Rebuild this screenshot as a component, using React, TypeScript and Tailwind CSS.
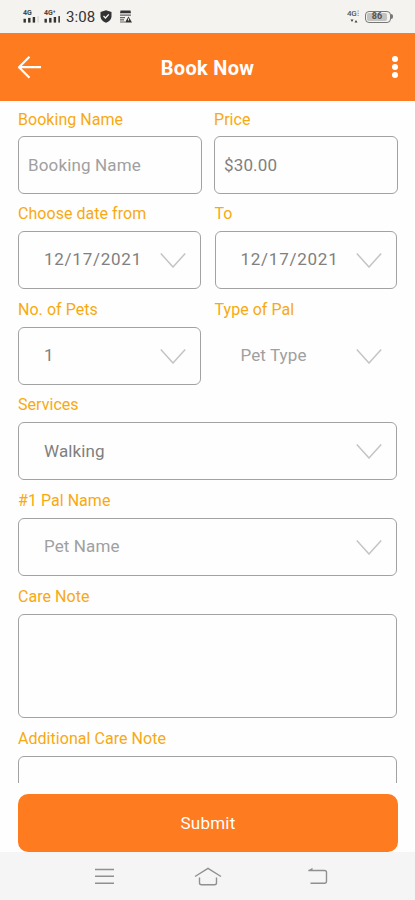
import { useState, type ReactNode } from "react";
import clsx from "clsx";

function Signal({ label, bars }: { label: string; bars: string[] }) {
  return (
    <div className="flex w-4 flex-col items-start">
      <span className="h-[6px] text-[7px] leading-[6px] font-bold text-[#444]">{label}</span>
      <svg width="16" height="7" viewBox="0 0 16 7">
        {bars.map((color, i) => (
          <rect key={i} x={0.5 + i * 4.6} y={2.8 - i * 0.9} width="2.4" height={3.8 + i * 0.9} fill={color} />
        ))}
      </svg>
    </div>
  );
}

function StatusBar() {
  return (
    <div className="flex h-[33px] shrink-0 items-center bg-[#f4f3f0] pr-[22px] pl-[23px] text-[#333]">
      <Signal label="4G" bars={["#333", "#333", "#333", "#ddd"]} />
      <div className="w-[5px]" />
      <Signal label="4G⁺" bars={["#333", "#333", "#333", "#444"]} />
      <span className="ml-[6px] pt-px text-[15px] leading-none tracking-[0.1px] text-[#333]">3:08</span>
      <svg className="ml-[5px]" width="12" height="13" viewBox="0 0 12 13">
        <path d="M6 .3 11.5 2v4.5c0 3-2.3 5-5.5 6.3C2.800 11.500.5 9.500.5 6.500V2Z" fill="#333" />
        <path d="m3.500 6 2 2 3.300-3.600" fill="none" stroke="#f4f3f0" strokeWidth="1.300" />
      </svg>
      <svg className="ml-[7px]" width="13" height="13" viewBox="0 0 13 13">
        <path d="M1.500.5h10l.5 2.800H1Z" fill="#333" />
        <path d="M1 5.200h11M1 7.600h5M1 9.800h4M1 12h5" stroke="#666" strokeWidth="1.200" />
        <path d="M9.500 6.500 13 12.500H6Z" fill="#333" />
        <path d="M9.500 8.500v2" stroke="#eee" />
      </svg>
      <div className="ml-auto flex h-4 w-[14px] flex-col">
        <span className="h-[9px] text-[8px] leading-[10px] font-medium tracking-tight whitespace-nowrap text-[#555]">4G⁝</span>
        <svg className="ml-[3px]" width="8" height="6" viewBox="0 0 8 6">
          <path d="M.5 1.500h3L2 4Z M4.500 4.500h3L6 2Z" fill="#444" />
        </svg>
      </div>
      <div className="ml-[4px] flex items-center">
        <div className="flex h-[12px] w-[26px] items-center rounded-[4px] border border-[#777] p-px">
          <div className="flex h-full w-[20px] items-center justify-center rounded-[2px] bg-[#c2c2c0] text-[9px] leading-none font-bold text-[#555]">
            86
          </div>
        </div>
        <div className="h-[5px] w-[2px] rounded-r-full bg-[#777]" />
      </div>
    </div>
  );
}

function AppBar() {
  return (
    <header className="grid h-[68px] shrink-0 grid-cols-[1fr_auto_1fr] items-center bg-[#ff7b20] px-[17px] text-white">
      <button type="button" aria-label="Back">
        <svg width="25" height="24" viewBox="0 0 25 24" fill="none" stroke="currentColor" strokeWidth="2.200">
          <path d="M24 12.200H2M12.500 1.700 2 12.200l10.500 10.500" strokeLinejoin="round" />
        </svg>
      </button>
      <h1 className="pt-[2px] text-[20px] leading-none font-bold tracking-[0.3px]">Book Now</h1>
      <button type="button" aria-label="More" className="flex flex-col gap-[2px] justify-self-end">
        <span className="size-[6px] rounded-full bg-white" />
        <span className="size-[6px] rounded-full bg-white" />
        <span className="size-[6px] rounded-full bg-white" />
      </button>
    </header>
  );
}

function Field({ label, labelClass = "h-[37.67px] pt-[4px]", children }: { label: string; labelClass?: string; children?: ReactNode }) {
  return (
    <label className="block">
      <span className={clsx("flex items-center text-[16px] leading-none tracking-[0.04px] text-[#f8a912]", labelClass)}>
        {label}
      </span>
      {children}
    </label>
  );
}

type PickerProps = { value: string; muted?: boolean; bordered?: boolean; date?: boolean };

function Picker({ value, muted, bordered = true, date }: PickerProps) {
  return (
    <button
      type="button"
      className={clsx(
        "flex h-[58px] w-full items-center justify-between rounded-[6px] border pr-[14px] pl-[25px] text-[17px]",
        date ? "tracking-[0.75px]" : "tracking-[0.1px]",
        bordered ? "border-[#a2a2a2]" : "border-transparent",
        muted ? "text-[#a0a0a0]" : "text-[#808080]",
      )}
    >
      <span>{value}</span>
      <svg width="26" height="16" viewBox="0 0 26 16" fill="none" stroke="#c4c4c4" strokeWidth="1.500">
        <path d="M.8 1.500 13 15 25.200 1.500" />
      </svg>
    </button>
  );
}

const inputClass =
  "block h-[58px] w-full rounded-[6px] border border-[#a2a2a2] px-[9px] text-[17px] tracking-[0.15px] text-[#808080] outline-none placeholder:text-[#a0a0a0]";

function NavBar() {
  return (
    <nav className="flex h-12 shrink-0 items-center bg-[#f5f5f5] pl-[94px] text-[#909090]">
      <svg width="21" height="17" viewBox="0 0 21 17" stroke="currentColor" strokeWidth="1.400">
        <path d="M1 1.500h19M1 8.300h19M1 15.200h19" />
      </svg>
      <svg className="ml-[79px]" width="28" height="19" viewBox="0 0 28 19" fill="none" stroke="currentColor" strokeWidth="1.400">
        <path d="M1 9.500 14 1.300l13 8.200M5.500 10.500v5.200q0 2 2 2h13q2 0 2-2v-5.200" strokeLinejoin="round" />
      </svg>
      <svg className="ml-[85px]" width="21" height="18" viewBox="0 0 21 18" fill="none" stroke="currentColor" strokeWidth="1.400">
        <path d="M1.500 3.500h16q2 0 2 2v8.700q0 2-2 2H3.500" />
        <path d="M5.500.8v2.900H.8Z" fill="currentColor" stroke="none" />
      </svg>
    </nav>
  );
}

export default function App() {
  const [name, setName] = useState("");
  const [price, setPrice] = useState("$30.00");
  const [careNote, setCareNote] = useState("");

  return (
    <div className="flex h-[900px] w-[415px] flex-col overflow-hidden bg-[#fefefe] font-['Roboto',sans-serif]">
      <StatusBar />
      <AppBar />
      <main className="h-[682px] shrink-0 overflow-hidden px-[18px]">
        <div className="-mr-px grid grid-cols-2 gap-[12px]">
          <Field label="Booking Name" labelClass="h-[35px] pt-[2px]">
            <input className={inputClass} placeholder="Booking Name" value={name} onChange={(e) => setName(e.target.value)} />
          </Field>
          <Field label="Price" labelClass="h-[35px] pt-[2px]">
            <input className={inputClass} value={price} onChange={(e) => setPrice(e.target.value)} />
          </Field>
        </div>
        <div className="grid grid-cols-2 gap-x-[14px]">
          <Field label="Choose date from" labelClass="h-[37px] pt-[2px]">
            <Picker value="12/17/2021" date />
          </Field>
          <Field label="To" labelClass="h-[37px] pt-[2px]">
            <Picker value="12/17/2021" date />
          </Field>
          <Field label="No. of Pets">
            <Picker value="1" />
          </Field>
          <Field label="Type of Pal">
            <Picker value="Pet Type" muted bordered={false} />
          </Field>
        </div>
        <Field label="Services">
          <Picker value="Walking" />
        </Field>
        <Field label="#1 Pal Name">
          <Picker value="Pet Name" muted />
        </Field>
        <Field label="Care Note">
          <textarea
            className="block h-[104px] w-full resize-none rounded-[6px] border border-[#a2a2a2] p-[10px] text-[17px] text-[#808080] outline-none"
            value={careNote}
            onChange={(e) => setCareNote(e.target.value)}
          />
        </Field>
        <Field label="Additional Care Note" labelClass="h-[38.500px] pt-[5px]">
          <textarea className="block h-[104px] w-full resize-none rounded-[6px] border border-[#a2a2a2] p-[10px] text-[17px] text-[#808080] outline-none" />
        </Field>
      </main>
      <div className="h-[69px] shrink-0 pt-[11px] pr-[17px] pl-[18px]">
        <button type="button" className="h-[58px] w-full rounded-[10px] bg-[#ff7b20] pt-[2px] text-[17px] tracking-[0.2px] text-white">
          Submit
        </button>
      </div>
      <NavBar />
    </div>
  );
}
